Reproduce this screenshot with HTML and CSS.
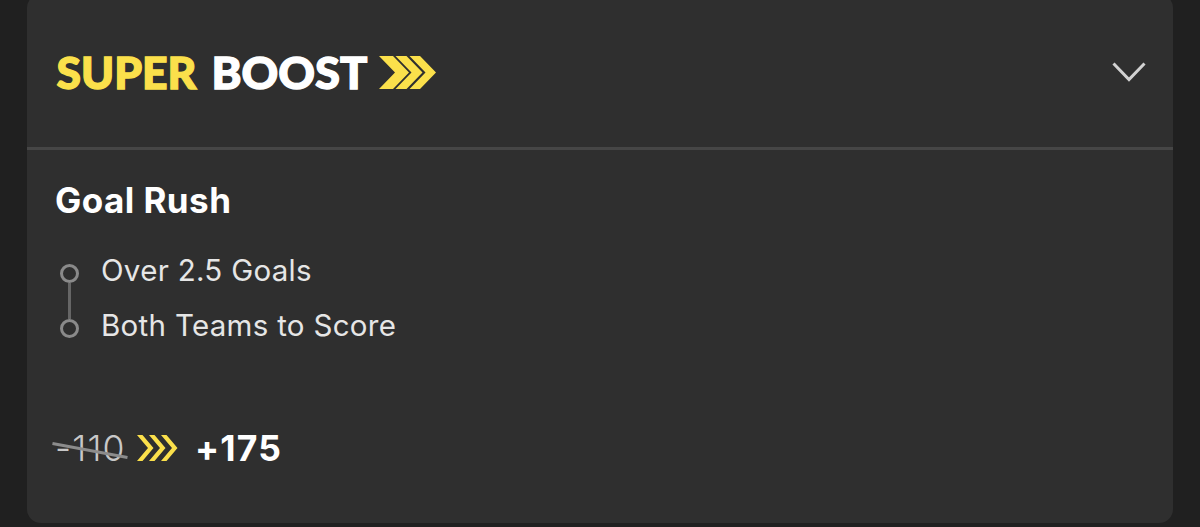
FILE: index.html
```html
<!DOCTYPE html>
<html lang="en">
<head>
    <meta charset="utf-8">
    <title>Super Boost</title>
    <link rel="stylesheet" href="styles.css">
</head>
<body>
    <div class="card">
        <div class="header">
            <svg class="logo" width="382" height="64" viewBox="0 -11 382 64">
                <text class="logo-super" x="0.500" y="37.500" textLength="140" lengthAdjust="spacingAndGlyphs">SUPER</text>
                <text class="logo-boost" x="155.500" y="37.500" textLength="156" lengthAdjust="spacingAndGlyphs">BOOST</text>
                <g class="logo-arrows">
                    <path d="M323 5h14l16 16.500L337 38h-14l16-16.500z"/>
                    <path d="M339.500 5h11l16 16.500L350.500 38h-11l16-16.500z"/>
                    <path d="M353.500 5h10.500l16 16.500L364 38h-10.500l16-16.500z"/>
                </g>
            </svg>
            <svg class="chevron" width="34" height="20" viewBox="0 0 34 20">
                <path d="M1.500 1.500L17 17.500 32.500 1.500"/>
            </svg>
        </div>
        <div class="content">
            <h2 class="title">Goal Rush</h2>
            <ul class="selections">
                <li>Over 2.5 Goals</li>
                <li>Both Teams to Score</li>
            </ul>
            <div class="odds">
                <span class="old-price">-110
                    <svg class="strike" width="76" height="17" viewBox="0 0 76 17">
                        <path d="M0.500 1.500L75.500 15.500"/>
                    </svg>
                </span>
                <svg class="arrows" width="42" height="26" viewBox="0 0 42 26">
                    <path d="M0 0h5.500l11 13L5.500 26H0L11 13z"/>
                    <path d="M12 0h5.500l11 13L17.500 26h-5.500L23 13z"/>
                    <path d="M24 0h5.500l11 13L29.500 26h-5.500L35 13z"/>
                </svg>
                <span class="new-price">+175</span>
            </div>
        </div>
    </div>
</body>
</html>
```
FILE: styles.css
```css
body {
    margin: 0;
    height: 527px;
    overflow: hidden;
    background-color: #202020;
    font-family: Inter, "Liberation Sans", sans-serif;
    color: #fff;
}

.card {
    box-sizing: border-box;
    width: 1146px;
    height: 529px;
    margin: -6px 0 0 27px;
    background-color: #2f2f2f;
    border-radius: 14px;
}

.header {
    box-sizing: border-box;
    height: 156px;
    padding: 2px 27px 0 29px;
    border-bottom: 3px solid #464646;
    display: flex;
    align-items: center;
    justify-content: space-between;
}

.logo {
    font-family: Lato, sans-serif;
    font-size: 44px;
    font-weight: 900;
}

.logo-super,
.logo-arrows,
.arrows {
    fill: #fbe04b;
}

.logo-boost {
    fill: #fff;
}

/* thicken the wordmark a little */
.logo-super {
    stroke: #fbe04b;
    stroke-width: 1.3;
}

.logo-boost {
    stroke: #fff;
    stroke-width: 1.3;
}

.chevron,
.strike {
    fill: none;
    stroke: #d2d2d2;
    stroke-width: 3;
}

.content {
    padding: 28px 28px 0;
}

.title {
    margin: 0;
    font-size: 35px;
    line-height: 44px;
    font-weight: 700;
    letter-spacing: 0.45px;
}

.selections {
    margin: 21px 0 0;
    padding: 0;
    list-style: none;
    font-size: 29.5px;
    color: #e6e6e6;
    letter-spacing: 0.3px;
}

.selections li {
    position: relative;
    height: 55px;
    line-height: 55px;
    padding-left: 46px;
}

.selections li::before {
    content: "";
    position: absolute;
    box-sizing: border-box;
    left: 5px;
    top: 21px;
    width: 19px;
    height: 19px;
    border: 3px solid #8a8a8a;
    border-radius: 50%;
}

/* line joining the two selections */
.selections li:first-child::after {
    content: "";
    position: absolute;
    left: 13px;
    top: 40px;
    width: 3px;
    height: 36px;
    background-color: #666;
}

.odds {
    margin-top: 73px;
    display: flex;
    align-items: center;
    height: 44px;
    font-size: 35.5px;
}

.old-price {
    position: relative;
    width: 82px;
    font-weight: 350;
    letter-spacing: 1.2px;
    color: #c8c8c8;
}

.strike {
    position: absolute;
    left: -3px;
    top: 15px;
    stroke: #8c8c8c;
}

.new-price {
    margin-left: 16px;
    font-weight: 700;
    letter-spacing: 1.2px;
}
```
